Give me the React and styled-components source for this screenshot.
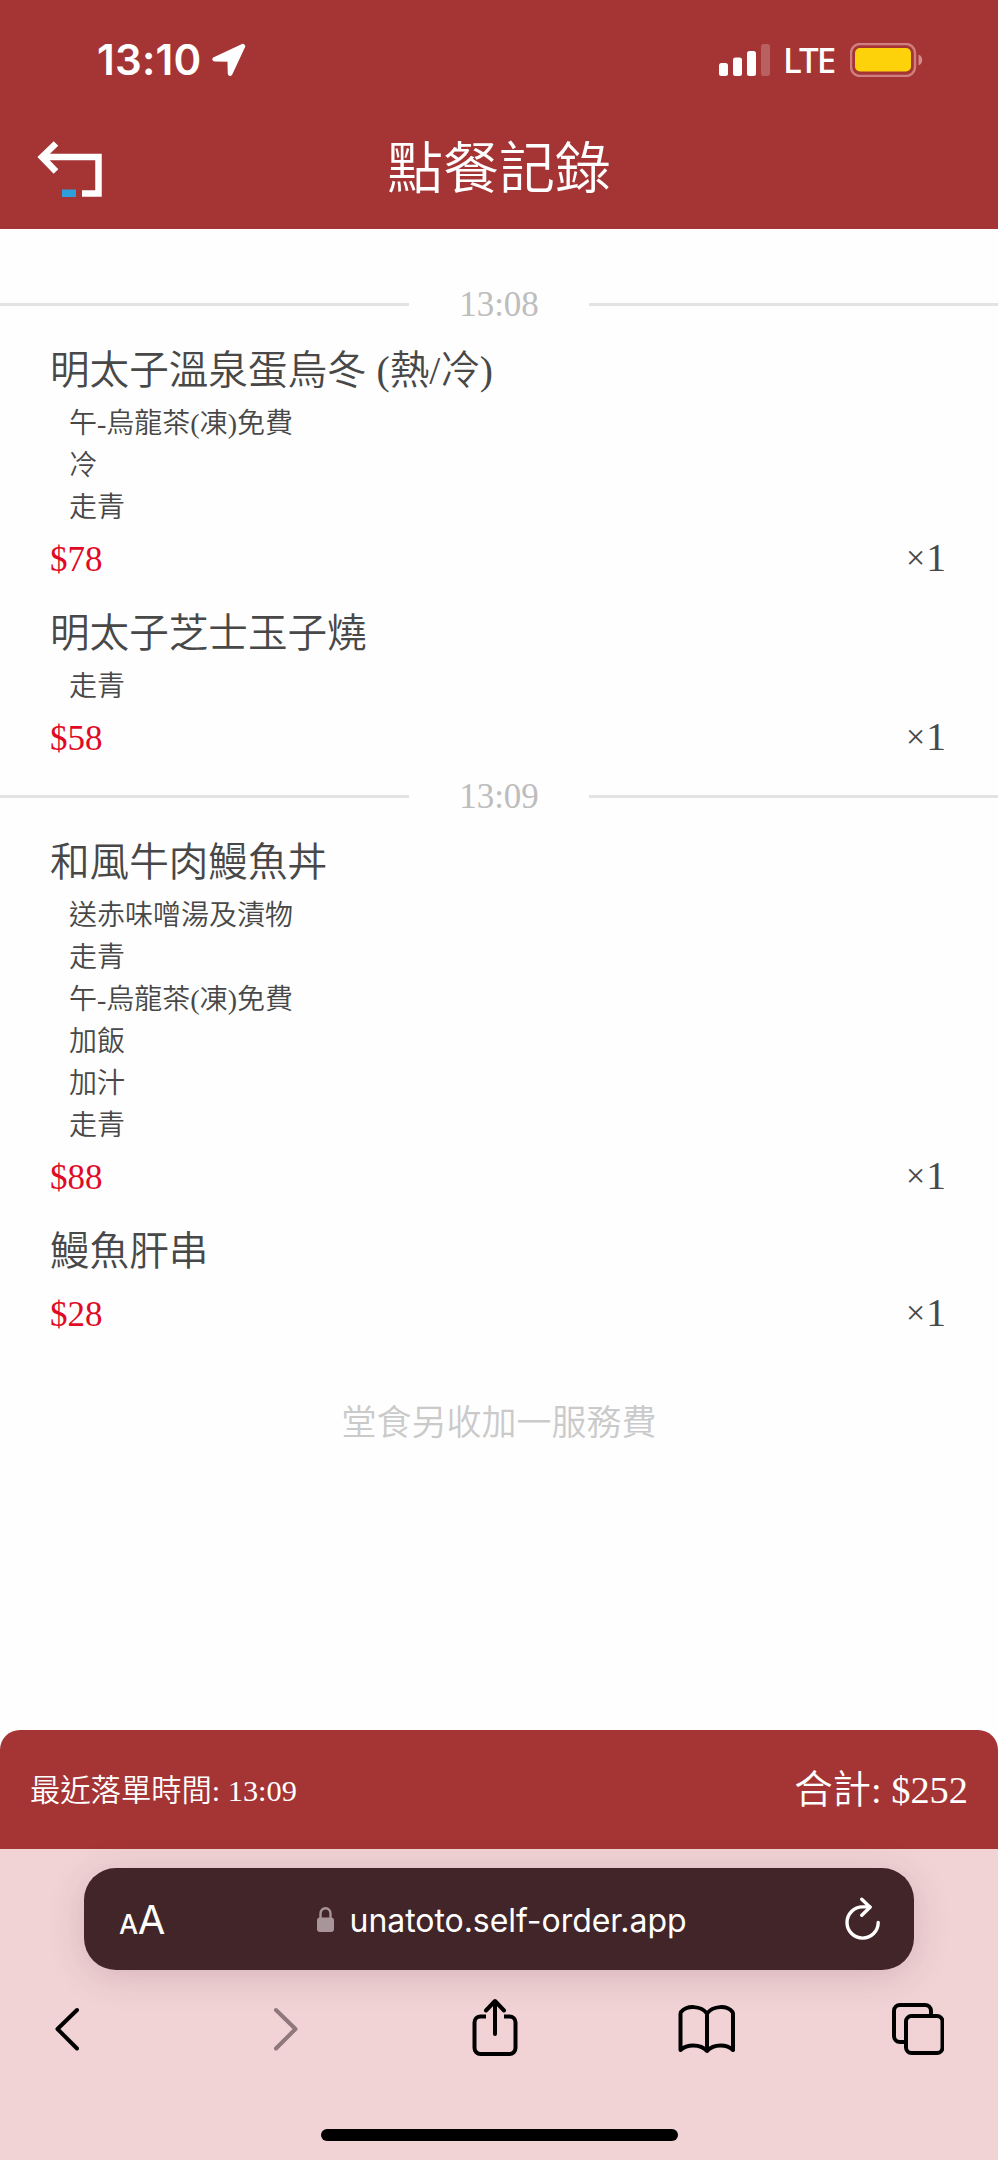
import React from "react";
import styled, { createGlobalStyle } from "styled-components";

const RED = "#a43534";

const GlobalStyle = createGlobalStyle`
  body {
    margin: 0;
    background: #fefefe;
    font-family: "Liberation Serif", "Noto Sans CJK TC", serif;
    color: #484848;
  }
`;

const Page = styled.div`
  width: 998px;
  height: 2160px;
  display: flex;
  flex-direction: column;
  overflow: hidden;
`;

const Header = styled.header`
  flex: none;
  height: 229px;
  background: ${RED};
  color: #fff;
`;

const StatusBar = styled.div`
  height: 120px;
  box-sizing: border-box;
  padding: 0 75px 0 97px;
  display: flex;
  align-items: center;
  & svg {
    display: block;
  }
`;

const Clock = styled.span`
  font: 600 42px/120px Inter, sans-serif;
  width: 115px;
  letter-spacing: 0.2px;
`;

const Carrier = styled.span`
  font: 500 35px/120px "Noto Sans", sans-serif;
  letter-spacing: -2px;
  width: 52px;
  margin: 0 15px 0 12px;
`;

const Spacer = styled.div`
  flex: 1;
`;

const TitleBar = styled.div`
  height: 94px;
  display: grid;
  grid-template-columns: 140px 1fr 140px;
  align-items: center;
`;

const BackButton = styled.button`
  border: none;
  background: none;
  padding: 4px 0 0 37px;
  & svg {
    display: block;
  }
`;

const Title = styled.h1`
  margin: 0;
  text-align: center;
  font-weight: 350;
  font-size: 56px;
  line-height: 90px;
  padding-top: 4px;
`;

const Orders = styled.main`
  flex: 1;
  padding-top: 43px;
`;

const TimeDivider = styled.div`
  height: 65px;
  display: flex;
  align-items: center;
  font-size: 35px;
  color: #bdbdbd;
  &::before,
  &::after {
    content: "";
    flex: 1;
    height: 3px;
    background: #e3e3e3;
  }
`;

const Time = styled.span`
  width: 180px;
  text-align: center;
`;

const Item = styled.section`
  padding: 0 50px;
  & + & {
    margin-top: 15px;
  }
`;

const Name = styled.h2`
  margin: 0;
  padding-top: 2px;
  font-weight: 350;
  font-size: 39.6px;
  line-height: 64px;
`;

const Options = styled.ul`
  list-style-type: none;
  margin: 0;
  padding: 0 0 0 19px;
  font-weight: 350;
  font-size: 28px;
  line-height: 42px;
`;

const PriceRow = styled.div`
  margin-top: 6px;
  height: 50px;
  display: flex;
  align-items: center;
  justify-content: space-between;
`;

const Price = styled.span`
  font-size: 35px;
  color: #e00a26;
`;

const Quantity = styled.span`
  display: flex;
  align-items: center;
  gap: 1px;
  font-size: 39.6px;
  line-height: 46px;
  padding-bottom: 4px;
  margin-right: 2px;
`;

const Times = styled.span`
  font-size: 34px;
`;

const Note = styled.p`
  margin: 57px 0 0;
  text-align: center;
  font-weight: 350;
  font-size: 35px;
  line-height: 54px;
  color: #cacaca;
`;

const Summary = styled.footer`
  flex: none;
  height: 119px;
  box-sizing: border-box;
  padding: 0 30px 7px;
  display: flex;
  align-items: center;
  justify-content: space-between;
  background: ${RED};
  border-radius: 20px 20px 0 0;
  color: #fff;
  font-weight: 350;
`;

const LastOrder = styled.span`
  font-size: 30.3px;
  padding-top: 3px;
`;

const Total = styled.span`
  font-size: 38.4px;
`;

const Browser = styled.div`
  flex: none;
  height: 311px;
  box-sizing: border-box;
  padding-top: 19px;
  background: #f1d3d5;
  display: flex;
  flex-direction: column;
`;

const AddressBar = styled.div`
  height: 102px;
  margin: 0 84px;
  box-sizing: border-box;
  padding: 0 33px 0 35px;
  display: flex;
  align-items: center;
  justify-content: space-between;
  background: #422528;
  border-radius: 32px;
  box-shadow: 0 6px 36px rgba(90, 30, 45, 0.17);
  color: #fff;
  font-family: Inter, sans-serif;
`;

const TextSize = styled.span`
  width: 49px;
  padding-top: 6px;
  font-size: 40px;
  line-height: 60px;
  letter-spacing: -0.5px;
  white-space: nowrap;
  & small {
    font-size: 27px;
    font-weight: 500;
  }
`;

const Url = styled.span`
  display: flex;
  align-items: center;
  gap: 15px;
  margin-right: 11px;
  padding-top: 2px;
  font-size: 32px;
  letter-spacing: -0.05px;
`;

const Toolbar = styled.nav`
  height: 118px;
  padding: 0 46px 0 33px;
  display: flex;
  align-items: center;
  justify-content: space-between;
`;

const ToolButton = styled.button`
  width: 68px;
  height: 64px;
  padding: 0;
  border: none;
  background: none;
  display: flex;
  align-items: center;
  justify-content: center;
  color: ${props => (props.$muted ? "#8f787b" : "#000")};
`;

const HomeIndicator = styled.div`
  width: 357px;
  height: 12px;
  margin: 41px auto 0;
  border-radius: 6px;
  background: #000;
`;

const stroke = {
  fill: "none",
  stroke: "currentColor",
  strokeWidth: 4,
  strokeLinecap: "round",
  strokeLinejoin: "round"
};

const Location = () => (
  <svg width="34" height="34" viewBox="0 0 34 34" fill="#fff" stroke="#fff" strokeWidth="3.5" strokeLinejoin="round">
    <path d="M30.8 2.5L2.5 15.8Q1.5 16.5 2.8 16.7L17.2 17L17.5 30.5Q17.8 32.2 18.8 30.5L31.5 3.2Z" />
  </svg>
);

const Signal = () => (
  <svg width="52" height="33" viewBox="0 0 52 33" fill="#fff">
    <rect x="0" y="19" width="9" height="13" rx="2.5" />
    <rect x="14" y="13.5" width="9" height="18.5" rx="2.5" />
    <rect x="28" y="7" width="9" height="25" rx="2.5" />
    <rect x="42" y="0" width="9" height="32" rx="2.5" opacity=".22" />
  </svg>
);

const Battery = () => (
  <svg width="73" height="34" viewBox="0 0 73 34">
    <rect x="1" y="1" width="64" height="32" rx="9" fill="none" stroke="#d07f80" strokeWidth="2.4" />
    <rect x="5" y="5" width="56" height="23.5" rx="5" fill="#fdd20a" />
    <path d="M68.5 11.5C73.5 13.5 73.5 20.5 68.5 22.5Z" fill="#d58b8b" />
  </svg>
);

const Back = () => (
  <svg width="68" height="58" viewBox="0 0 68 58" fill="none" stroke="#fff" strokeWidth="6.5">
    <path d="M19 3.5L5 17L19 31.5M5 17H61.5V53.5H45" />
    <rect x="25" y="49.5" width="14" height="7.5" fill="#2f9fdc" stroke="none" />
  </svg>
);

const Lock = () => (
  <svg width="19" height="28" viewBox="0 0 19 28">
    <rect x="1" y="11.5" width="17" height="14.5" rx="3" fill="#a89599" />
    <path d="M4.5 12.5V7.8C4.5.4 14.5.4 14.5 7.8V12.5" fill="none" stroke="#a89599" strokeWidth="2.4" />
  </svg>
);

const Reload = () => (
  <svg width="36" height="44" viewBox="0 0 36 44" {...stroke} strokeWidth={3.4}>
    <path d="M33.2 25.5A15.6 15.6 0 1 1 17.6 9.9H25" />
    <path d="M16.8 2.2L25 10.2L16.8 18.3" />
  </svg>
);

const ChevronLeft = () => (
  <svg width="24" height="44" viewBox="0 0 24 44" {...stroke}>
    <path d="M22 3L2.5 22L22 41.5" />
  </svg>
);

const ChevronRight = () => (
  <svg width="36" height="44" viewBox="-12 0 36 44" {...stroke}>
    <path d="M2 3L21.5 22L2 41.5" />
  </svg>
);

const Share = () => (
  <svg width="48" height="60" viewBox="-4 1 48 60" {...stroke} overflow="visible">
    <path d="M13 18.5H7.5A6 6 0 0 0 1.5 24.5V50A6 6 0 0 0 7.5 56H36.5A6 6 0 0 0 42.5 50V24.5A6 6 0 0 0 36.5 18.5H31" strokeLinecap="butt" />
    <path d="M22 36V4M13 12.5L22 3L31 12.5" />
  </svg>
);

const Book = () => (
  <svg width="60" height="50" viewBox="-4 0 60 50" {...stroke} overflow="visible">
    <path d="M28 9.5C22 1.5 8 1 2 8Q1.5 8.5 1.5 10V46C8 40 21 39.5 28 47C35 39.5 48 40 54 46V10Q54 8.5 53.5 8C48 1 34 1.5 28 9.5V47" />
  </svg>
);

const Tabs = () => (
  <svg width="52" height="52" viewBox="0 0 52 52" {...stroke}>
    <rect x="14" y="13" width="36.5" height="37" rx="5.5" />
    <path d="M39 13V8A6 6 0 0 0 33 2H8A6 6 0 0 0 2 8V33A6 6 0 0 0 8 39H14" />
  </svg>
);

const orders = [
  {
    time: "13:08",
    items: [
      {
        name: "明太子溫泉蛋烏冬 (熱/冷)",
        options: ["午-烏龍茶(凍)免費", "冷", "走青"],
        price: 78
      },
      { name: "明太子芝士玉子燒", options: ["走青"], price: 58 }
    ]
  },
  {
    time: "13:09",
    items: [
      {
        name: "和風牛肉鰻魚丼",
        options: ["送赤味噌湯及漬物", "走青", "午-烏龍茶(凍)免費", "加飯", "加汁", "走青"],
        price: 88
      },
      { name: "鰻魚肝串", options: [], price: 28 }
    ]
  }
];

const total = orders
  .flatMap(order => order.items)
  .reduce((sum, item) => sum + item.price, 0);

const OrderItem = ({ name, options, price }) => (
  <Item>
    <Name>{name}</Name>
    {options.length ? (
      <Options>
        {options.map((option, index) => (
          <li key={index}>{option}</li>
        ))}
      </Options>
    ) : null}
    <PriceRow>
      <Price>${price}</Price>
      <Quantity>
        <Times>×</Times>1
      </Quantity>
    </PriceRow>
  </Item>
);

export default function App() {
  return (
    <Page lang="zh-Hant">
      <GlobalStyle />
      <Header>
        <StatusBar>
          <Clock>13:10</Clock>
          <Location />
          <Spacer />
          <Signal />
          <Carrier>LTE</Carrier>
          <Battery />
        </StatusBar>
        <TitleBar>
          <BackButton aria-label="返回">
            <Back />
          </BackButton>
          <Title>點餐記錄</Title>
        </TitleBar>
      </Header>
      <Orders>
        {orders.map(order => (
          <div key={order.time}>
            <TimeDivider>
              <Time>{order.time}</Time>
            </TimeDivider>
            {order.items.map(item => (
              <OrderItem key={item.name} {...item} />
            ))}
          </div>
        ))}
        <Note>堂食另收加一服務費</Note>
      </Orders>
      <Summary>
        <LastOrder>最近落單時間: 13:09</LastOrder>
        <Total>合計: ${total}</Total>
      </Summary>
      <Browser>
        <AddressBar>
          <TextSize>
            <small>A</small>A
          </TextSize>
          <Url>
            <Lock />
            unatoto.self-order.app
          </Url>
          <Reload />
        </AddressBar>
        <Toolbar>
          <ToolButton>
            <ChevronLeft />
          </ToolButton>
          <ToolButton $muted>
            <ChevronRight />
          </ToolButton>
          <ToolButton>
            <Share />
          </ToolButton>
          <ToolButton>
            <Book />
          </ToolButton>
          <ToolButton>
            <Tabs />
          </ToolButton>
        </Toolbar>
        <HomeIndicator />
      </Browser>
    </Page>
  );
}
